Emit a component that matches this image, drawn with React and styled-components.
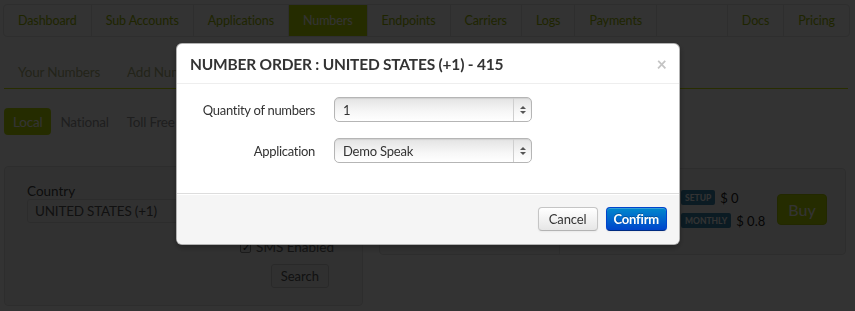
import React from "react";
import styled, { createGlobalStyle, css } from "styled-components";

const GlobalStyle = createGlobalStyle`
  html, body {
    margin: 0;
    padding: 0;
    background: #fff;
    font-family: Lato, "Open Sans", sans-serif;
    color: #555;
  }
  * { box-sizing: border-box; }
`;

const Page = styled.div`
  width: 855px;
  height: 311px;
  padding: 4px 5px 0 3px;
  overflow: hidden;
`;

const NavBar = styled.nav`
  display: flex;
  height: 33px;
  border: 1px solid #e4e4e4;
  border-radius: 4px;
  background: #fcfcfc;
`;

const NavItem = styled.div`
  display: flex;
  align-items: center;
  padding: 0 14px;
  font-size: 12.5px;
  letter-spacing: -0.1px;
  color: #9ab800;
  border-right: 1px solid #e4e4e4;
  ${({ right }) =>
    right &&
    css`
      border-right: none;
      border-left: 1px solid #e4e4e4;
    `}
  ${({ active }) =>
    active &&
    css`
      background: #b9dc00;
      color: #fff;
    `}
`;

const Spacer = styled.div`
  flex: 1;
`;

const SubNav = styled.div`
  display: flex;
  gap: 27px;
  height: 33px;
  margin: 19px 2px 0 1px;
  padding: 0 14px;
  align-items: center;
  border-bottom: 1px solid #c8e000;
`;

const SubItem = styled.div`
  font-size: 13.5px;
  letter-spacing: -0.2px;
  color: #aeb280;
`;

const Pills = styled.div`
  display: flex;
  margin: 19px 0 0 1px;
`;

const Pill = styled.div`
  height: 27px;
  padding: 0 9px;
  display: flex;
  align-items: center;
  font-size: 13.5px;
  letter-spacing: -0.2px;
  border-radius: 4px;
  color: #999;
  ${({ active }) =>
    active &&
    css`
      background: #b9dc00;
      color: #fff;
    `}
`;

const Content = styled.div`
  display: flex;
  align-items: flex-start;
  gap: 16px;
  margin: 31px 0 0 1px;
`;

const Panel = styled.div`
  border: 1px solid #e2e2e2;
  border-radius: 4px;
  background: #f6f6f6;
`;

const SearchPanel = styled(Panel)`
  width: 359px;
  height: 140px;
  padding: 16px 33px 0 22px;
  display: flex;
  flex-direction: column;
`;

const FieldLabel = styled.div`
  font-size: 13.5px;
  color: #444;
  line-height: 16px;
`;

const TextInput = styled.div`
  height: 24px;
  width: 310px;
  border: 1px solid #ddd;
  border-radius: 3px;
  background: #f2f2f2;
  padding: 0 7px;
  display: flex;
  align-items: center;
  font-size: 13.5px;
  letter-spacing: -0.2px;
  color: #555;
`;

const CheckRow = styled.div`
  margin-top: 16px;
  align-self: flex-end;
  display: flex;
  align-items: center;
  gap: 5px;
  font-size: 13.5px;
  color: #666;
  margin-right: -5px;
`;

const Check = styled.span`
  width: 11px;
  height: 11px;
  border: 1px solid #888;
  border-radius: 2px;
  background: #eee;
  font-size: 10px;
  line-height: 9px;
  text-align: center;
  color: #111;
`;

const SmallButton = styled.div`
  margin-top: 9px;
  align-self: flex-end;
  height: 24px;
  padding: 0 9px;
  display: flex;
  align-items: center;
  border: 1px solid #ccc;
  border-radius: 3px;
  background: #f0f0f0;
  font-size: 13px;
  color: #555;
`;

const ResultPanel = styled(Panel)`
  margin-top: 2px;
  width: 467px;
  height: 87px;
  display: flex;
`;

const NumberCell = styled.div`
  width: 180px;
  border-right: 1px solid #e2e2e2;
`;

const PriceCell = styled.div`
  flex: 1;
  display: flex;
  align-items: center;
  padding: 0 18px 5px 121px;
`;

const Prices = styled.div`
  display: flex;
  flex-direction: column;
  gap: 7px;
  white-space: nowrap;
`;

const PriceRow = styled.div`
  display: flex;
  align-items: center;
  gap: 5px;
  font-size: 13px;
  color: #222;
`;

const Badge = styled.span`
  height: 15px;
  padding: 0 4px;
  display: flex;
  align-items: center;
  border-radius: 2px;
  background: #3b87ad;
  color: #fff;
  font-size: 8.5px;
  font-weight: 700;
`;

const BuyButton = styled.div`
  margin-left: auto;
  width: 50px;
  height: 31px;
  display: flex;
  align-items: center;
  justify-content: center;
  border: 1px solid #a8c800;
  border-radius: 4px;
  background: #b9dc00;
  color: #fff;
  font-size: 16px;
`;

const Backdrop = styled.div`
  position: fixed;
  inset: 0;
  background: rgba(0, 0, 0, 0.8);
`;

const Modal = styled.div`
  position: fixed;
  top: 43px;
  left: 176px;
  width: 504px;
  background: #fff;
  border: 1px solid rgba(0, 0, 0, 0.3);
  border-radius: 6px;
  box-shadow: 0 3px 7px rgba(0, 0, 0, 0.3);
  overflow: hidden;
`;

const ModalHeader = styled.div`
  height: 40px;
  padding: 0 12px 0 13px;
  display: flex;
  align-items: center;
  justify-content: space-between;
  border-bottom: 1px solid #eee;
`;

const ModalTitle = styled.h3`
  margin: 0;
  font-size: 15.5px;
  font-weight: 700;
  letter-spacing: -0.2px;
  color: #333;
`;

const Close = styled.span`
  font-size: 18px;
  font-weight: 700;
  color: #c4c4c4;
  line-height: 1;
`;

const ModalBody = styled.div`
  display: grid;
  grid-template-columns: 138px 198px;
  column-gap: 19px;
  row-gap: 16px;
  align-items: center;
  padding: 13px 0 30px;
`;

const RowLabel = styled.label`
  text-align: right;
  font-size: 13px;
  letter-spacing: -0.3px;
  color: #333;
`;

const Select = styled.div`
  position: relative;
  height: 25px;
  display: flex;
  align-items: center;
  padding-left: 8px;
  border: 1px solid #b5b5b5;
  border-radius: 5px;
  background: linear-gradient(#e3e3e3, #f7f7f7 60%, #fff);
  box-shadow: inset 0 1px 1px rgba(0, 0, 0, 0.08);
  font-size: 13px;
  letter-spacing: -0.2px;
  color: #333;
`;

const Arrows = styled.span`
  position: absolute;
  right: 0;
  top: 0;
  bottom: 0;
  width: 18px;
  border-left: 1px solid #cfcfcf;
  display: flex;
  flex-direction: column;
  align-items: center;
  justify-content: center;
  gap: 2px;
`;

const Tri = styled.span`
  width: 0;
  height: 0;
  border-left: 3px solid transparent;
  border-right: 3px solid transparent;
  ${({ down }) =>
    down ? "border-top: 3px solid #555;" : "border-bottom: 3px solid #555;"}
`;

const ModalFooter = styled.div`
  height: 51px;
  padding: 0 12px;
  display: flex;
  align-items: center;
  justify-content: flex-end;
  gap: 8px;
  border-top: 1px solid #ddd;
  background: #f5f5f5;
  box-shadow: inset 0 1px 0 #fff;
`;

const Button = styled.button`
  height: 24px;
  padding: 0 10px;
  border-radius: 4px;
  font-family: inherit;
  font-size: 13px;
  letter-spacing: -0.1px;
  cursor: pointer;
  border: 1px solid #c5c5c5;
  border-bottom-color: #b3b3b3;
  background: linear-gradient(#fff, #e6e6e6);
  color: #333;
  box-shadow: inset 0 1px 0 rgba(255, 255, 255, 0.2), 0 1px 2px rgba(0, 0, 0, 0.05);
  ${({ primary }) =>
    primary &&
    css`
      padding: 0 7px;
      border-color: #0044cc #0044cc #002a80;
      background: linear-gradient(#0088cc, #0044cc);
      color: #fff;
      font-weight: 700;
      letter-spacing: -0.2px;
      text-shadow: 0 -1px 0 rgba(0, 0, 0, 0.25);
    `}
`;

const SelectBox = ({ value }) => (
  <Select>
    {value}
    <Arrows>
      <Tri />
      <Tri down />
    </Arrows>
  </Select>
);

const navItems = ["Dashboard", "Sub Accounts", "Applications", "Numbers", "Endpoints", "Carriers", "Logs", "Payments"];

const App = () => {
  return (
    <>
      <GlobalStyle />
      <Page>
        <NavBar>
          {navItems.map((item) => (
            <NavItem key={item} active={item === "Numbers"}>
              {item}
            </NavItem>
          ))}
          <Spacer />
          <NavItem right>Docs</NavItem>
          <NavItem right>Pricing</NavItem>
        </NavBar>
        <SubNav>
          <SubItem>Your Numbers</SubItem>
          <SubItem>Add Numbers</SubItem>
        </SubNav>
        <Pills>
          <Pill active>Local</Pill>
          <Pill>National</Pill>
          <Pill>Toll Free</Pill>
        </Pills>
        <Content>
          <SearchPanel>
            <FieldLabel>Country</FieldLabel>
            <TextInput>UNITED STATES (+1)</TextInput>
            <CheckRow>
              <Check>✓</Check>
              SMS Enabled
            </CheckRow>
            <SmallButton>Search</SmallButton>
          </SearchPanel>
          <ResultPanel>
            <NumberCell />
            <PriceCell>
              <Prices>
                <PriceRow>
                  <Badge>SETUP</Badge>$ 0
                </PriceRow>
                <PriceRow>
                  <Badge>MONTHLY</Badge>$ 0.8
                </PriceRow>
              </Prices>
              <BuyButton>Buy</BuyButton>
            </PriceCell>
          </ResultPanel>
        </Content>
      </Page>
      <Backdrop />
      <Modal>
        <ModalHeader>
          <ModalTitle>NUMBER ORDER : UNITED STATES (+1) - 415</ModalTitle>
          <Close>×</Close>
        </ModalHeader>
        <ModalBody>
          <RowLabel>Quantity of numbers</RowLabel>
          <SelectBox value="1" />
          <RowLabel>Application</RowLabel>
          <SelectBox value="Demo Speak" />
        </ModalBody>
        <ModalFooter>
          <Button>Cancel</Button>
          <Button primary>Confirm</Button>
        </ModalFooter>
      </Modal>
    </>
  );
};

export default App;
